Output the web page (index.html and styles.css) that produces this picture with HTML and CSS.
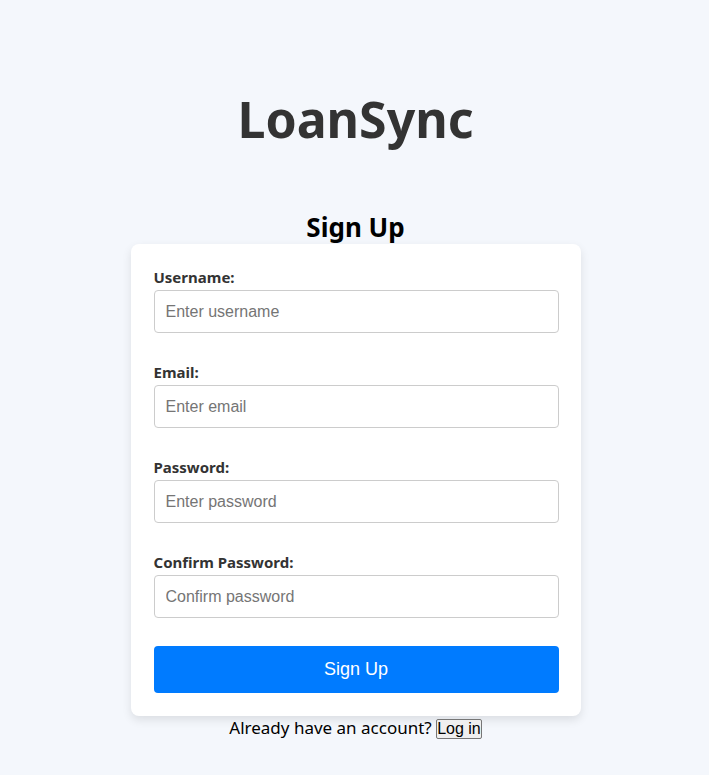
FILE: index.html
```html
<!DOCTYPE html>
<html lang="en">
<head>
<meta charset="utf-8">
<title>LoanSync - Sign Up</title>
<link rel="stylesheet" href="styles.css">
</head>
<body>
<div class="page">
  <h1 class="brand">LoanSync</h1>
  <h2 class="title">Sign Up</h2>
  <form class="card">
    <div class="field">
      <label class="label" for="u">Username:</label>
      <input class="input" id="u" type="text" placeholder="Enter username">
    </div>
    <div class="field">
      <label class="label" for="e">Email:</label>
      <input class="input" id="e" type="email" placeholder="Enter email">
    </div>
    <div class="field">
      <label class="label" for="p">Password:</label>
      <input class="input" id="p" type="password" placeholder="Enter password">
    </div>
    <div class="field">
      <label class="label" for="c">Confirm Password:</label>
      <input class="input" id="c" type="password" placeholder="Confirm password">
    </div>
    <button class="submit" type="button">Sign Up</button>
  </form>
  <p class="alt">Already have an account? <button class="link-btn" type="button">Log in</button></p>
</div>
</body>
</html>
```
FILE: styles.css
```css
html, body {
  margin: 0;
  padding: 0;
}
body {
  background: #f4f7fc;
  font-family: "Noto Sans", "Open Sans", sans-serif;
  color: #000;
}
.page {
  display: flex;
  flex-direction: column;
  align-items: center;
  padding-top: 86px;
  padding-left: 2px;
}
.brand {
  margin: 0;
  font-size: 50px;
  line-height: 66px;
  font-weight: 700;
  color: #333;
}
.title {
  margin: 59px 0 0;
  font-size: 26px;
  line-height: 32px;
  font-weight: 700;
}
.card {
  box-sizing: border-box;
  width: 450px;
  margin-top: 1px;
  padding: 22px 22px 23px 23px;
  background: #fff;
  border-radius: 8px;
  box-shadow: 0 4px 10px rgba(0, 0, 0, 0.1);
  display: flex;
  flex-direction: column;
}
.field {
  display: flex;
  flex-direction: column;
  margin-bottom: 28px;
}
.label {
  font-size: 15px;
  line-height: 22px;
  margin-bottom: 2px;
  font-weight: 700;
  color: #333;
}
.input {
  box-sizing: border-box;
  height: 43px;
  margin-top: 0;
  padding: 0 11px;
  border: 1px solid #ccc;
  border-radius: 4px;
  font-family: "Liberation Sans", Arial, sans-serif;
  font-size: 16px;
  background: #fff;
}
.input::placeholder {
  color: #757575;
}
.submit {
  height: 47px;
  margin-top: 0;
  border: none;
  border-radius: 4px;
  background: #007bff;
  color: #fff;
  font-family: "Liberation Sans", Arial, sans-serif;
  font-size: 18px;
}
.alt {
  margin: 0;
  font-size: 17px;
  line-height: 24px;
}
.link-btn {
  font-family: "Liberation Sans", Arial, sans-serif;
  font-size: 16px;
  padding: 0;
  border: 1px solid #767676;
  border-radius: 2px;
  background: #efefef;
  color: #000;
}
```
